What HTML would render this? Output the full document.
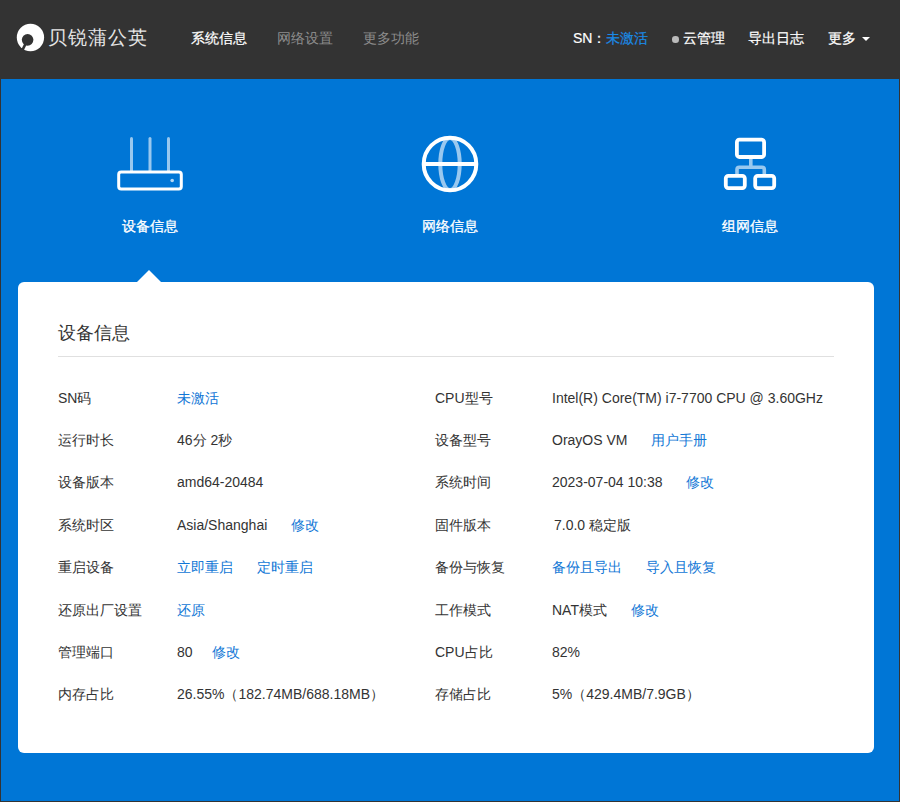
<!DOCTYPE html>
<html><head><meta charset="utf-8">
<style>
*{margin:0;padding:0;box-sizing:border-box}
html,body{width:900px;height:802px;overflow:hidden;background:#333;font-family:"Liberation Sans",sans-serif;font-size:14px;color:#333}
.hdr{position:absolute;left:0;top:0;width:900px;height:79px;background:#333}
.abs{position:absolute;white-space:nowrap;line-height:1}
.nav{-webkit-text-stroke:0.2px currentColor}
.blue{position:absolute;left:1px;top:79px;width:898px;height:722px;background:#0076d6}
.card{position:absolute;left:18px;top:282px;width:856px;height:471px;background:#fff;border-radius:6px}
.tri{position:absolute;left:137px;top:270px;width:0;height:0;border-left:12px solid transparent;border-right:12px solid transparent;border-bottom:12px solid #fff}
.lbl{color:#333}
.lnk{color:#1177d6}
.r{position:absolute;white-space:nowrap;line-height:20px;font-size:14px}
</style></head><body>
<div class="hdr">
  <svg class="abs" style="left:0;top:0" width="60" height="60" viewBox="0 0 60 60"><circle cx="30.45" cy="37.5" r="13.65" fill="#fff"/><circle cx="27.6" cy="39.85" r="5.8" fill="#333"/><polygon points="28.76,40.44 26.44,39.26 19.18,53.53 21.50,54.71" fill="#333"/></svg>
  <div class="abs" style="left:48px;top:28px;font-size:19px;letter-spacing:1px;color:#e6e6e6;font-weight:300">贝锐蒲公英</div>
  <div class="abs nav" style="left:191px;top:31px;color:#fff">系统信息</div>
  <div class="abs" style="left:277px;top:31px;color:#8c8c8c">网络设置</div>
  <div class="abs" style="left:363px;top:31px;color:#8c8c8c">更多功能</div>
  <div class="abs nav" style="left:573px;top:31px;color:#fff">SN：<span style="color:#1a8ae6">未激活</span></div>
  <div class="abs" style="left:672px;top:36px;width:6.6px;height:6.6px;border-radius:50%;background:#bbb"></div><div class="abs nav" style="left:683px;top:31px;color:#fff">云管理</div>
  <div class="abs nav" style="left:748px;top:31px;color:#fff">导出日志</div>
  <div class="abs nav" style="left:828px;top:31px;color:#fff">更多</div><div class="abs" style="left:862px;top:37px;width:0;height:0;border-left:4px solid transparent;border-right:4px solid transparent;border-top:4px solid #fff"></div>
</div>
<div class="blue"></div>
<svg class="abs" style="left:100px;top:120px" width="100" height="80" viewBox="100 120 100 80">
  <g stroke="#fff" stroke-opacity="0.6" stroke-width="3" stroke-linecap="round" fill="none">
    <line x1="131.5" y1="138.5" x2="131.5" y2="171"/>
    <line x1="150" y1="138.5" x2="150" y2="171"/>
    <line x1="168.5" y1="138.5" x2="168.5" y2="171"/>
  </g>
  <rect x="118.7" y="172" width="62.6" height="17" rx="2.5" stroke="#fff" stroke-width="3" fill="none"/>
  <circle cx="172.2" cy="180.5" r="1.8" fill="#fff" fill-opacity="0.7"/>
</svg>
<svg class="abs" style="left:400px;top:120px" width="100" height="80" viewBox="400 120 100 80">
  <ellipse cx="450" cy="164" rx="9.7" ry="26" stroke="#fff" stroke-opacity="0.6" stroke-width="4" fill="none"/>
  <circle cx="450" cy="164" r="26.3" stroke="#fff" stroke-width="4" fill="none"/>
  <line x1="424" y1="164" x2="476" y2="164" stroke="#fff" stroke-width="4"/>
</svg>
<svg class="abs" style="left:700px;top:120px" width="100" height="80" viewBox="700 120 100 80">
  <path d="M737 174 V169.5 Q737 167.2 739.3 167.2 H762 Q764.3 167.2 764.3 169.5 V174 M750.8 159 V165.4" stroke="#fff" stroke-opacity="0.6" stroke-width="3.6" fill="none"/>
  <g stroke="#fff" stroke-width="3.8" fill="none">
    <rect x="736.9" y="139.7" width="27.2" height="17.3" rx="2.5"/>
    <rect x="725.8" y="175.8" width="19" height="12.3" rx="2.5"/>
    <rect x="755.2" y="175.8" width="19" height="12.3" rx="2.5"/>
  </g>
</svg>

<div class="abs" style="left:122px;top:219px;color:#fff;-webkit-text-stroke:0.3px #fff">设备信息</div>
<div class="abs" style="left:422px;top:219px;color:#fff;-webkit-text-stroke:0.3px #fff">网络信息</div>
<div class="abs" style="left:722px;top:219px;color:#fff;-webkit-text-stroke:0.3px #fff">组网信息</div>
<div class="tri"></div>
<div class="card"></div>
<div class="abs" style="left:58px;top:324px;font-size:18px;color:#333">设备信息</div>
<div class="abs" style="left:58px;top:356px;width:776px;height:1px;background:#e0e0e0"></div>
<div class="r" style="left:58px;top:388px">SN码</div>
<div class="r lnk" style="left:177px;top:388px">未激活</div>
<div class="r" style="left:435px;top:388px">CPU型号</div>
<div class="r" style="left:552px;top:388px">Intel(R) Core(TM) i7-7700 CPU @ 3.60GHz</div>
<div class="r" style="left:58px;top:430px">运行时长</div>
<div class="r" style="left:177px;top:430px">46分 2秒</div>
<div class="r" style="left:435px;top:430px">设备型号</div>
<div class="r" style="left:552px;top:430px">OrayOS VM</div>
<div class="r lnk" style="left:651px;top:430px">用户手册</div>
<div class="r" style="left:58px;top:472px">设备版本</div>
<div class="r" style="left:177px;top:472px">amd64-20484</div>
<div class="r" style="left:435px;top:472px">系统时间</div>
<div class="r" style="left:552px;top:472px">2023-07-04 10:38</div>
<div class="r lnk" style="left:686px;top:472px">修改</div>
<div class="r" style="left:58px;top:515px">系统时区</div>
<div class="r" style="left:177px;top:515px">Asia/Shanghai</div>
<div class="r lnk" style="left:291px;top:515px">修改</div>
<div class="r" style="left:435px;top:515px">固件版本</div>
<div class="r" style="left:554px;top:515px">7.0.0 稳定版</div>
<div class="r" style="left:58px;top:557px">重启设备</div>
<div class="r lnk" style="left:177px;top:557px">立即重启</div>
<div class="r lnk" style="left:257px;top:557px">定时重启</div>
<div class="r" style="left:435px;top:557px">备份与恢复</div>
<div class="r lnk" style="left:552px;top:557px">备份且导出</div>
<div class="r lnk" style="left:646px;top:557px">导入且恢复</div>
<div class="r" style="left:58px;top:600px">还原出厂设置</div>
<div class="r lnk" style="left:177px;top:600px">还原</div>
<div class="r" style="left:435px;top:600px">工作模式</div>
<div class="r" style="left:552px;top:600px">NAT模式</div>
<div class="r lnk" style="left:631px;top:600px">修改</div>
<div class="r" style="left:58px;top:642px">管理端口</div>
<div class="r" style="left:177px;top:642px">80</div>
<div class="r lnk" style="left:212px;top:642px">修改</div>
<div class="r" style="left:435px;top:642px">CPU占比</div>
<div class="r" style="left:552px;top:642px">82%</div>
<div class="r" style="left:58px;top:684px">内存占比</div>
<div class="r" style="left:177px;top:684px">26.55%（182.74MB/688.18MB）</div>
<div class="r" style="left:435px;top:684px">存储占比</div>
<div class="r" style="left:552px;top:684px">5%（429.4MB/7.9GB）</div>
</body></html>
